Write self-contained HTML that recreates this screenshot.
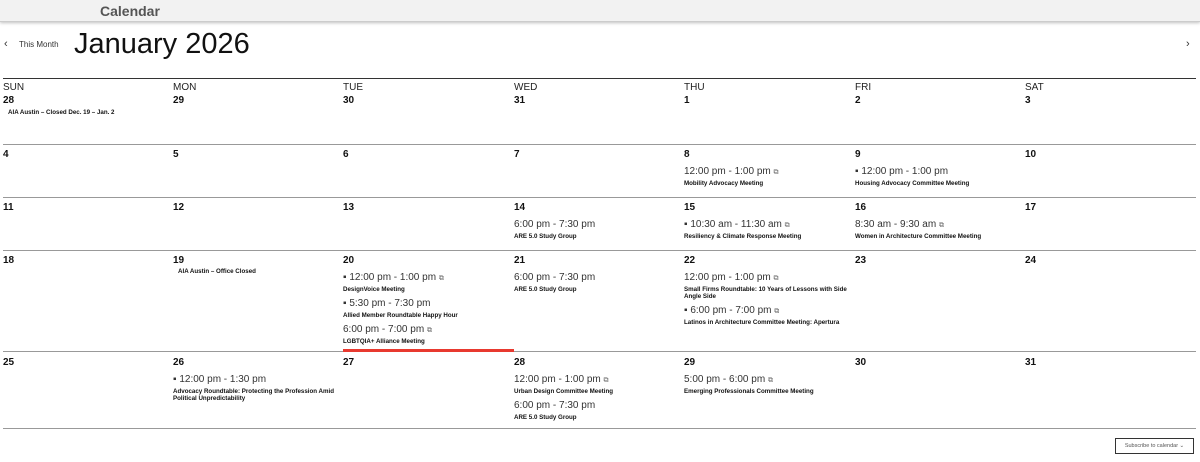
<!DOCTYPE html>
<html><head><meta charset="utf-8"><style>
body{margin:0;width:1200px;height:462px;background:#fff;position:relative;overflow:hidden;font-family:"Liberation Sans",sans-serif;color:#111}
.hdr{position:absolute;left:0;top:0;width:1200px;height:21px;background:#f2f2f2;border-bottom:1px solid #ccc;box-shadow:0 1px 3px rgba(0,0,0,.25)}
.hdr span{position:absolute;left:100px;top:3px;font-weight:bold;font-size:14px;color:#555}
.a{position:absolute;white-space:nowrap}
.ln{position:absolute;left:3px;width:1193px;height:1px;background:#999}
.dn{font-size:10px;line-height:11px;color:#222}
.d{font-size:10px;font-weight:bold;line-height:11px}
.t{font-size:10px;line-height:12px;color:#333}
.n{font-size:6.2px;font-weight:bold;line-height:7px}
.i{font-size:7px;color:#666}
</style></head><body>
<div class="hdr"><span>Calendar</span></div>
<div class="a" style="left:4px;top:38px;font-size:11px;color:#333">‹</div>
<div class="a" style="left:19px;top:40px;font-size:8px;color:#333">This Month</div>
<div class="a" style="left:74px;top:28px;font-size:29px;color:#111">January 2026</div>
<div class="a" style="left:1186px;top:38px;font-size:11px;color:#333">›</div>
<div class="ln" style="top:78px;background:#333;height:1px"></div>
<div class="ln" style="top:144px"></div>
<div class="ln" style="top:197px"></div>
<div class="ln" style="top:250px"></div>
<div class="ln" style="top:351px"></div>
<div class="ln" style="top:428px"></div>
<div class="a" style="left:343px;top:349px;width:171px;height:3px;background:#e8392f"></div>

<div class="a dn" style="left:3px;top:82px">SUN</div>
<div class="a dn" style="left:173px;top:82px">MON</div>
<div class="a dn" style="left:343px;top:82px">TUE</div>
<div class="a dn" style="left:514px;top:82px">WED</div>
<div class="a dn" style="left:684px;top:82px">THU</div>
<div class="a dn" style="left:855px;top:82px">FRI</div>
<div class="a dn" style="left:1025px;top:82px">SAT</div>

<div class="a d" style="left:3px;top:95px">28</div>
<div class="a d" style="left:173px;top:95px">29</div>
<div class="a d" style="left:343px;top:95px">30</div>
<div class="a d" style="left:514px;top:95px">31</div>
<div class="a d" style="left:684px;top:95px">1</div>
<div class="a d" style="left:855px;top:95px">2</div>
<div class="a d" style="left:1025px;top:95px">3</div>
<div class="a n" style="left:8px;top:109px">AIA Austin – Closed Dec. 19 – Jan. 2</div>

<div class="a d" style="left:3px;top:149px">4</div>
<div class="a d" style="left:173px;top:149px">5</div>
<div class="a d" style="left:343px;top:149px">6</div>
<div class="a d" style="left:514px;top:149px">7</div>
<div class="a d" style="left:684px;top:149px">8</div>
<div class="a d" style="left:855px;top:149px">9</div>
<div class="a d" style="left:1025px;top:149px">10</div>
<div class="a t" style="left:684px;top:166px">12:00 pm - 1:00 pm <span class="i">⧉</span></div>
<div class="a n" style="left:684px;top:180px">Mobility Advocacy Meeting</div>
<div class="a t" style="left:855px;top:166px">▪ 12:00 pm - 1:00 pm</div>
<div class="a n" style="left:855px;top:180px">Housing Advocacy Committee Meeting</div>

<div class="a d" style="left:3px;top:202px">11</div>
<div class="a d" style="left:173px;top:202px">12</div>
<div class="a d" style="left:343px;top:202px">13</div>
<div class="a d" style="left:514px;top:202px">14</div>
<div class="a d" style="left:684px;top:202px">15</div>
<div class="a d" style="left:855px;top:202px">16</div>
<div class="a d" style="left:1025px;top:202px">17</div>
<div class="a t" style="left:514px;top:219px">6:00 pm - 7:30 pm</div>
<div class="a n" style="left:514px;top:233px">ARE 5.0 Study Group</div>
<div class="a t" style="left:684px;top:219px">▪ 10:30 am - 11:30 am <span class="i">⧉</span></div>
<div class="a n" style="left:684px;top:233px">Resiliency &amp; Climate Response Meeting</div>
<div class="a t" style="left:855px;top:219px">8:30 am - 9:30 am <span class="i">⧉</span></div>
<div class="a n" style="left:855px;top:233px">Women in Architecture Committee Meeting</div>

<div class="a d" style="left:3px;top:255px">18</div>
<div class="a d" style="left:173px;top:255px">19</div>
<div class="a d" style="left:343px;top:255px">20</div>
<div class="a d" style="left:514px;top:255px">21</div>
<div class="a d" style="left:684px;top:255px">22</div>
<div class="a d" style="left:855px;top:255px">23</div>
<div class="a d" style="left:1025px;top:255px">24</div>
<div class="a n" style="left:178px;top:268px">AIA Austin – Office Closed</div>
<div class="a t" style="left:343px;top:272px">▪ 12:00 pm - 1:00 pm <span class="i">⧉</span></div>
<div class="a n" style="left:343px;top:286px">DesignVoice Meeting</div>
<div class="a t" style="left:343px;top:298px">▪ 5:30 pm - 7:30 pm</div>
<div class="a n" style="left:343px;top:312px">Allied Member Roundtable Happy Hour</div>
<div class="a t" style="left:343px;top:324px">6:00 pm - 7:00 pm <span class="i">⧉</span></div>
<div class="a n" style="left:343px;top:338px">LGBTQIA+ Alliance Meeting</div>
<div class="a t" style="left:514px;top:272px">6:00 pm - 7:30 pm</div>
<div class="a n" style="left:514px;top:286px">ARE 5.0 Study Group</div>
<div class="a t" style="left:684px;top:272px">12:00 pm - 1:00 pm <span class="i">⧉</span></div>
<div class="a n" style="left:684px;top:286px">Small Firms Roundtable: 10 Years of Lessons with Side<br>Angle Side</div>
<div class="a t" style="left:684px;top:305px">▪ 6:00 pm - 7:00 pm <span class="i">⧉</span></div>
<div class="a n" style="left:684px;top:319px">Latinos in Architecture Committee Meeting: Apertura</div>

<div class="a d" style="left:3px;top:357px">25</div>
<div class="a d" style="left:173px;top:357px">26</div>
<div class="a d" style="left:343px;top:357px">27</div>
<div class="a d" style="left:514px;top:357px">28</div>
<div class="a d" style="left:684px;top:357px">29</div>
<div class="a d" style="left:855px;top:357px">30</div>
<div class="a d" style="left:1025px;top:357px">31</div>
<div class="a t" style="left:173px;top:374px">▪ 12:00 pm - 1:30 pm</div>
<div class="a n" style="left:173px;top:388px">Advocacy Roundtable: Protecting the Profession Amid<br>Political Unpredictability</div>
<div class="a t" style="left:514px;top:374px">12:00 pm - 1:00 pm <span class="i">⧉</span></div>
<div class="a n" style="left:514px;top:388px">Urban Design Committee Meeting</div>
<div class="a t" style="left:514px;top:400px">6:00 pm - 7:30 pm</div>
<div class="a n" style="left:514px;top:414px">ARE 5.0 Study Group</div>
<div class="a t" style="left:684px;top:374px">5:00 pm - 6:00 pm <span class="i">⧉</span></div>
<div class="a n" style="left:684px;top:388px">Emerging Professionals Committee Meeting</div>

<div class="a" style="left:1115px;top:438px;width:79px;height:16px;border:1px solid #333;box-sizing:border-box;font-size:5.5px;line-height:14px;text-align:center;color:#555">Subscribe to calendar ⌄</div>
</body></html>
